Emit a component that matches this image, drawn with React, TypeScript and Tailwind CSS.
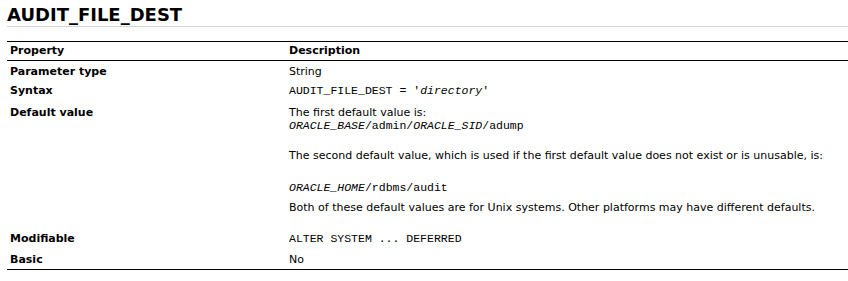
export default function App() {
  const mono = "font-['Liberation_Mono',monospace] text-[11.5px]"

  const rows = [
    { name: 'Parameter type', pad: 'pt-[4px] pb-[2px] leading-[13px]', value: <span>String</span> },
    {
      name: 'Syntax',
      pad: 'pt-[4px] pb-[3px] leading-[14px]',
      value: (
        <span className={mono}>
          AUDIT_FILE_DEST = '<i>directory</i>'
        </span>
      ),
    },
    {
      name: 'Default value',
      pad: 'pt-[5px] pb-[3px] leading-[13px]',
      value: (
        <div className="pb-[11px]">
          <p>The first default value is:</p>
          <p className={mono}>
            <i>ORACLE_BASE</i>/admin/<i>ORACLE_SID</i>/adump
          </p>
          <p className="mt-[17px]">
            The second default value, which is used if the first default value does not exist or is unusable, is:
          </p>
          <p className={`${mono} mt-[19px]`}>
            <i>ORACLE_HOME</i>/rdbms/audit
          </p>
          <p className="mt-[7px]">
            Both of these default values are for Unix systems. Other platforms may have different defaults.
          </p>
        </div>
      ),
    },
    {
      name: 'Modifiable',
      pad: 'pt-[4px] pb-[3px] leading-[14px]',
      value: <span className={mono}>ALTER SYSTEM ... DEFERRED</span>,
    },
    { name: 'Basic', pad: 'pt-[4px] pb-[2px] leading-[14px]', value: <span>No</span> },
  ]

  return (
    <div className="bg-white w-[848px] h-[281px] pl-[7px] pt-[4px] text-black font-['DejaVu_Sans',sans-serif] text-[11px]">
      <h1 className="text-[18px] font-bold leading-[21px] border-b border-[#d4d4d4] pb-[1px]">
        AUDIT_FILE_DEST
      </h1>

      <table className="mt-[14px] w-full border-collapse border-y border-black">
        <thead>
          <tr className="border-b border-black">
            <th className="w-[282px] text-left font-bold pl-[3px] h-[19px] align-middle">Property</th>
            <th className="text-left font-bold h-[19px] align-middle">Description</th>
          </tr>
        </thead>
        <tbody>
          {rows.map((row) => (
            <tr key={row.name}>
              <td className={`pl-[3px] font-bold align-top ${row.pad}`}>{row.name}</td>
              <td className={`align-top ${row.pad}`}>{row.value}</td>
            </tr>
          ))}
        </tbody>
      </table>
    </div>
  )
}
